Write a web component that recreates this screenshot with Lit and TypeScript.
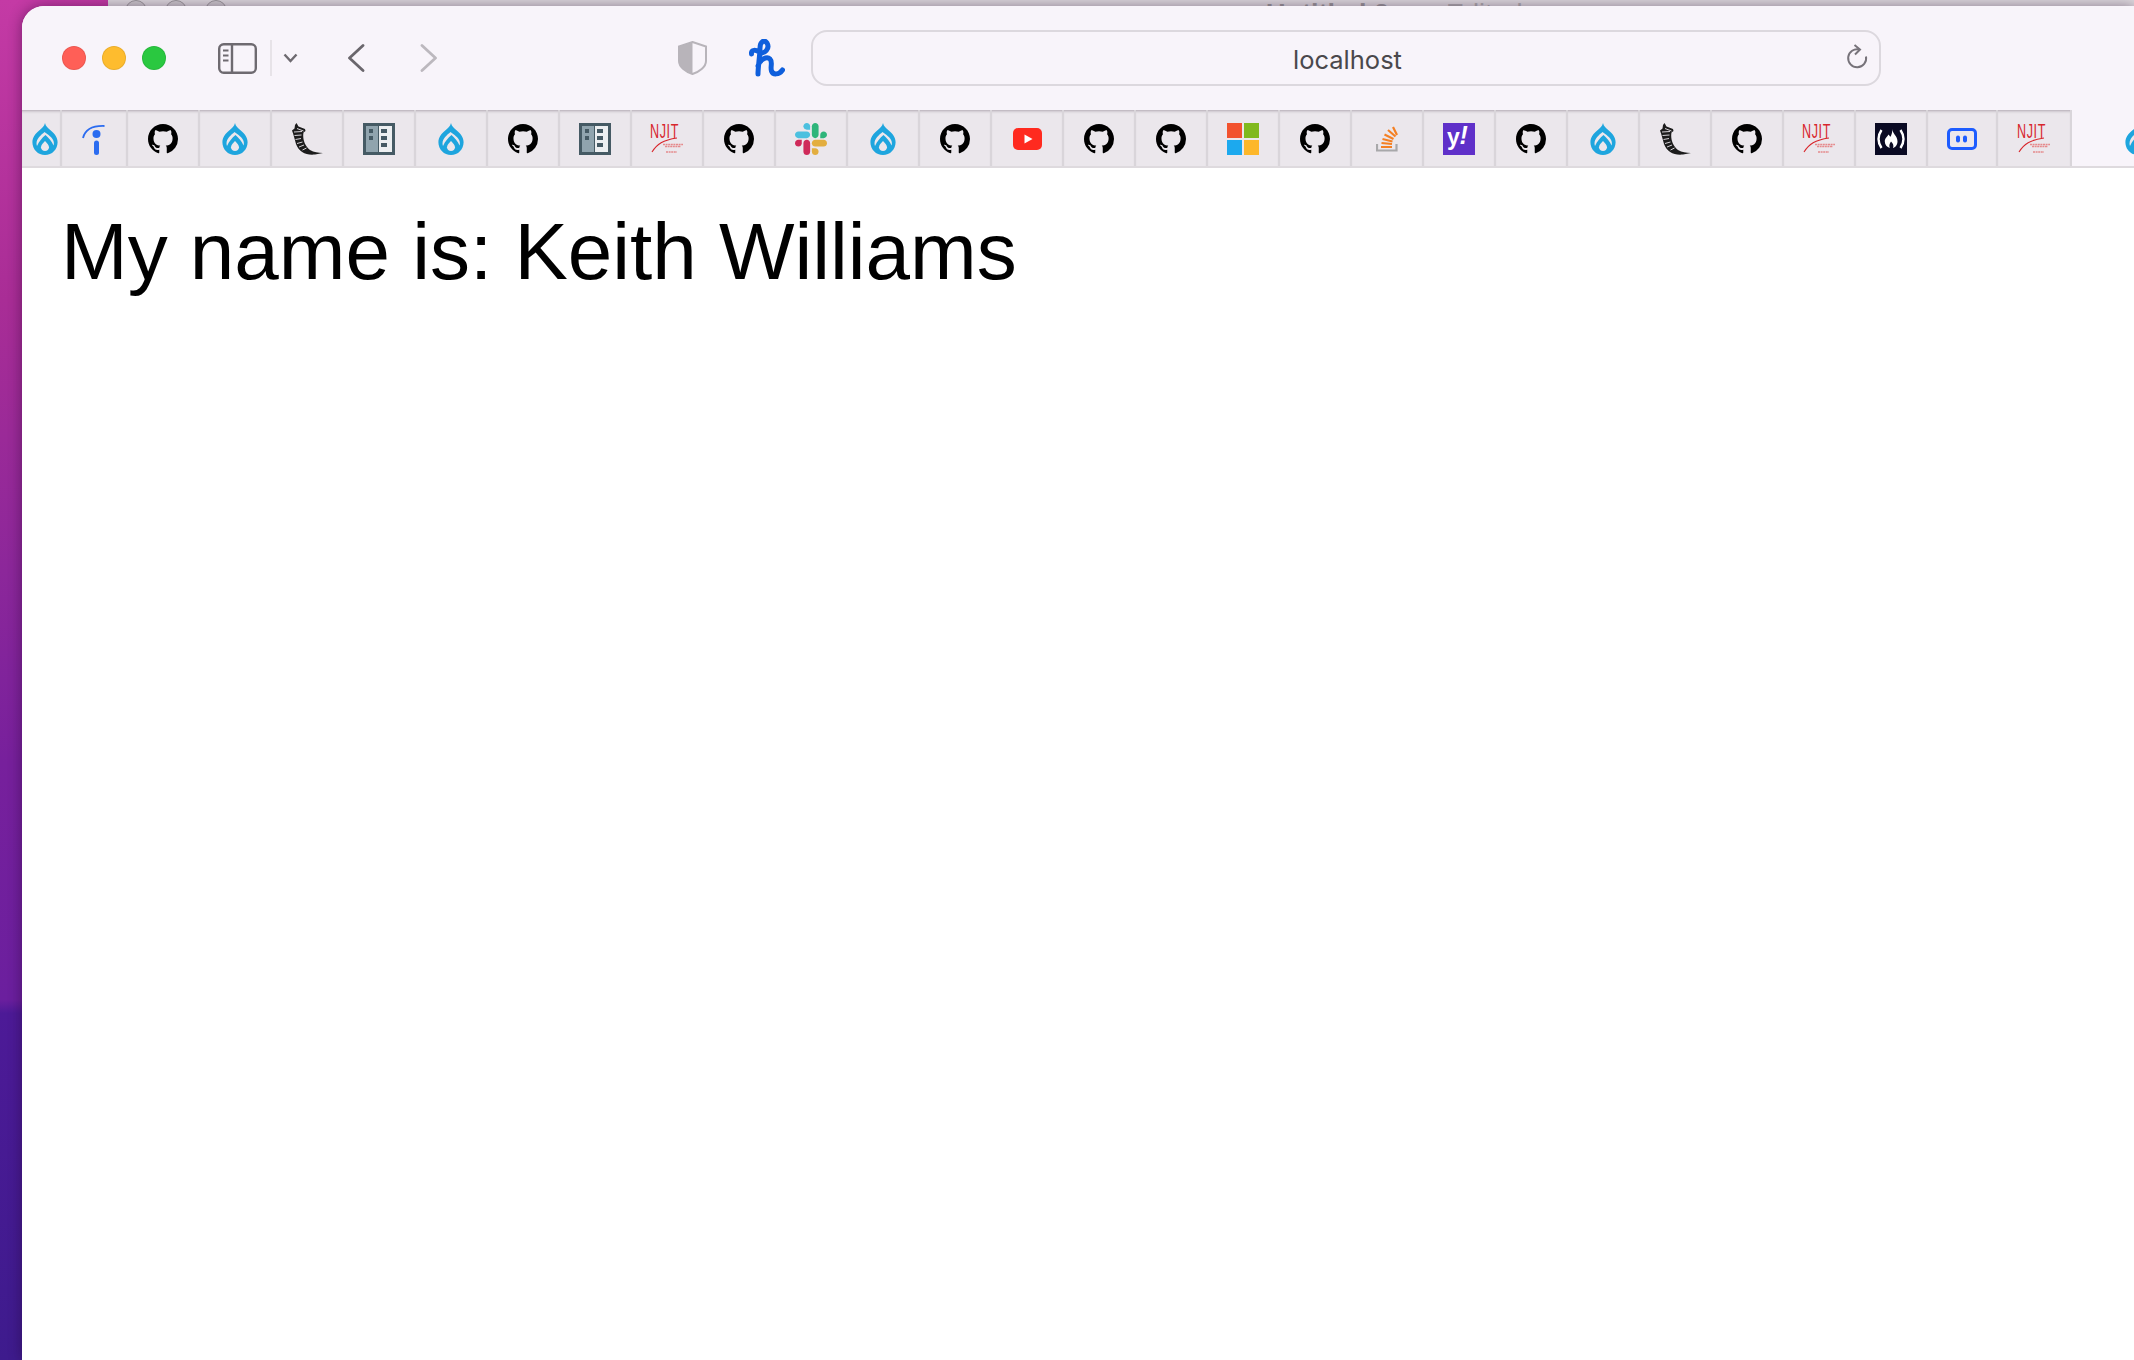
import { LitElement, html, css, svg } from "lit";
import { customElement } from "lit/decorators.js";

const GH = "M8 0C3.58 0 0 3.58 0 8c0 3.54 2.29 6.53 5.47 7.59.4.07.55-.17.55-.38 0-.19-.01-.82-.01-1.49-2.01.37-2.53-.49-2.69-.94-.09-.23-.48-.94-.82-1.13-.28-.15-.68-.52-.01-.53.63-.01 1.08.58 1.23.82.72 1.21 1.87.87 2.33.66.07-.52.28-.87.51-1.07-1.78-.2-3.64-.89-3.64-3.95 0-.87.31-1.59.82-2.15-.08-.2-.36-1.02.08-2.12 0 0 .67-.21 2.2.82.64-.18 1.32-.27 2-.27.68 0 1.36.09 2 .27 1.53-1.04 2.2-.82 2.2-.82.44 1.1.16 1.92.08 2.12.51.56.82 1.27.82 2.15 0 3.07-1.87 3.75-3.65 3.95.29.25.54.73.54 1.48 0 1.07-.01 1.93-.01 2.2 0 .21.15.46.55.38A8.013 8.013 0 0016 8c0-4.42-3.58-8-8-8z";

const njit = svg`<svg viewBox="0 -6 34 44" width="34" height="44">
    <text x="0" y="15" fill="#d8262c" font-family="Liberation Sans" font-size="21" transform="scale(.6 1)" letter-spacing="1">NJIT</text>
    <path d="M2 29C7 21 13 17 27 15" fill="none" stroke="#d8262c" stroke-width="1.100"/>
    <path d="M13 21.500H33M15 23.500H31M16 29H27" stroke="#e58a8c" stroke-width="1.300" stroke-dasharray="2 .6"/>
  </svg>`;

const icons: Record<string, unknown> = {
  github: svg`<svg viewBox="0 0 16 16" width="30" height="30"><path d=${GH} fill="#000"/></svg>`,
  drupal: svg`<svg viewBox="0 0 26 32" width="26" height="32">
    <path d="M13 0C13.600 3.200 16 5.200 18.800 7.600C22.600 10.800 25.600 14.600 25.600 19.200C25.600 26.400 20 32 13 32C6 32 .4 26.400 .4 19.200C.4 14.600 3.400 10.800 7.200 7.600C10 5.200 12.400 3.200 13 0Z" fill="#1ea5de"/>
    <path d="M12.500 9C9 12 4.500 15.500 4.500 20.500C4.500 21.500 4.700 22.300 5 23C7 18.500 10 15 13.500 12C16.500 14.500 20 18.500 21.500 22.500C22 21 22 20 21.500 18C20.500 14.500 16 11.500 12.500 9Z" fill="#ebe7ec"/>
    <path d="M13 18C15.300 20.300 17 22.300 17 24.300C17 26.600 15.200 28 13 28C10.800 28 9 26.600 9 24.300C9 22.300 10.700 20.300 13 18Z" fill="#ebe7ec"/>
  </svg>`,
  intercom: svg`<svg viewBox="0 0 24 32" width="24" height="32">
    <path d="M1 15C3 7 9 2.500 22.500 3" fill="none" stroke="#2b6cf0" stroke-width="1.800"/>
    <circle cx="14.500" cy="11" r="4" fill="#2b6cf0"/>
    <rect x="12" y="17.500" width="5" height="14.500" rx="2.500" fill="#2b6cf0"/>
  </svg>`,
  flask: svg`<svg viewBox="0 0 32 32" width="32" height="32">
    <path d="M4 2L5.500 0L7.500 3.500L14 6L14.500 8L12.500 9.500C11.500 15 13 22 19 27C23 29.500 27 29.500 32 30L24 31.500C15 32.500 8 29 5 21C3.500 16 2.500 11 1 7.500L3.500 5.500Z" fill="#1c1c1c"/>
    <path d="M3 9L11 8.500M3.500 12.500L10.500 12M4.500 16.500L10 15.500M6 20.500L11.500 19M8 24L13 22M11.500 27L15.500 25M6 5.500L12.500 8" stroke="#ebe7ec" stroke-width=".9" fill="none"/>
  </svg>`,
  book: svg`<svg viewBox="0 0 32 32" width="32" height="32">
    <rect width="32" height="32" fill="#455a64"/>
    <rect x="3" y="3" width="12" height="26" fill="#90a4ae"/>
    <rect x="16" y="3" width="13" height="26" fill="#eceff1"/>
    <rect x="6" y="6" width="4" height="4" fill="#455a64"/><rect x="6" y="13" width="4" height="4" fill="#455a64"/>
    <rect x="18" y="6" width="6" height="4" fill="#455a64"/><rect x="18" y="13" width="6" height="4" fill="#455a64"/><rect x="18" y="20" width="6" height="4" fill="#455a64"/>
  </svg>`,
  njit,
  slack: svg`<svg viewBox="0 0 122.800 122.800" width="32" height="32">
    <path d="M25.800 77.600c0 7.100-5.800 12.900-12.900 12.900S0 84.700 0 77.600s5.800-12.900 12.900-12.900h12.900v12.900z" fill="#cf2a5a"/>
    <path d="M32.300 77.600c0-7.100 5.800-12.900 12.900-12.900s12.900 5.800 12.900 12.900v32.300c0 7.100-5.800 12.900-12.900 12.900s-12.900-5.800-12.900-12.900V77.600z" fill="#cf2a5a"/>
    <path d="M45.200 25.800c-7.100 0-12.900-5.800-12.900-12.900S38.100 0 45.200 0s12.900 5.800 12.900 12.900v12.900H45.200z" fill="#4cc0df"/>
    <path d="M45.200 32.300c7.100 0 12.900 5.800 12.900 12.900s-5.800 12.900-12.900 12.900H12.900C5.800 58.100 0 52.300 0 45.200s5.800-12.900 12.900-12.900h32.300z" fill="#4cc0df"/>
    <path d="M97 45.200c0-7.100 5.800-12.900 12.900-12.900s12.900 5.800 12.900 12.900-5.800 12.900-12.900 12.900H97V45.200z" fill="#2eb57a"/>
    <path d="M90.500 45.200c0 7.100-5.800 12.900-12.900 12.900s-12.900-5.800-12.900-12.900V12.900C64.700 5.800 70.500 0 77.600 0s12.900 5.800 12.900 12.900v32.300z" fill="#2eb57a"/>
    <path d="M77.600 97c7.100 0 12.900 5.800 12.900 12.900s-5.800 12.900-12.900 12.900-12.900-5.800-12.900-12.900V97h12.900z" fill="#e3ae3f"/>
    <path d="M77.600 90.500c-7.100 0-12.900-5.800-12.900-12.900s5.800-12.900 12.900-12.900h32.300c7.100 0 12.900 5.800 12.900 12.900s-5.800 12.900-12.900 12.900H77.600z" fill="#e3ae3f"/>
  </svg>`,
  youtube: svg`<svg viewBox="0 0 29 22" width="29" height="22">
    <rect width="29" height="22" rx="5" fill="#ff2a1f"/><path d="M11.500 6.500V15.500L19.500 11Z" fill="#fff"/>
  </svg>`,
  microsoft: svg`<svg viewBox="0 0 32 32" width="32" height="32">
    <rect width="15" height="15" fill="#f2522e"/><rect x="17" width="15" height="15" fill="#80b91e"/>
    <rect y="17" width="15" height="15" fill="#1ca9ee"/><rect x="17" y="17" width="15" height="15" fill="#fdb72a"/>
  </svg>`,
  stack: svg`<svg viewBox="0 0 22 26" width="22" height="26">
    <path d="M1 18V24.500H20.500V18" fill="none" stroke="#a8a8aa" stroke-width="2.200"/>
    <path d="M5 21H16M5.500 17L16 18M6.500 13L16.500 15.500M8.500 8.500L17.500 13M12 4L19.500 10.500M17 1L21 9" fill="none" stroke="#f48024" stroke-width="2.200"/>
  </svg>`,
  yahoo: svg`<svg viewBox="0 0 32 32" width="32" height="32">
    <rect width="32" height="32" fill="#5f30c9"/>
    <text x="4" y="22" fill="#fff" font-family="Liberation Sans" font-weight="700" font-size="23">y</text>
    <text x="16.500" y="21" fill="#fff" font-family="Liberation Sans" font-weight="700" font-style="italic" font-size="25">!</text>
  </svg>`,
  fcc: svg`<svg viewBox="0 0 32 32" width="32" height="32">
    <rect width="32" height="32" fill="#0a0a23"/>
    <path d="M6.500 7C2.500 13 2.500 19 6.500 25M25.500 7C29.500 13 29.500 19 25.500 25" fill="none" stroke="#fff" stroke-width="2.400"/>
    <path d="M17 6C17.500 10.500 22.500 13 22.500 18.500C22.500 22 20 24.500 18 25C19 22.500 18 20.500 16 18.500C15 20.500 13.800 21.500 14.800 25C12 24 9.800 22 9.800 18.500C9.800 15 12.500 13.500 13.500 11.500C14.500 12.800 15 13.500 15.500 13.700C16.700 11.500 17.500 9 17 6Z" fill="#fff"/>
  </svg>`,
  blue: svg`<svg viewBox="0 0 30 22" width="30" height="22">
    <rect x="1.500" y="1.500" width="27" height="19" rx="3.500" fill="none" stroke="#1d5cff" stroke-width="3"/>
    <rect x="9" y="7.500" width="4" height="7" rx="2" fill="#1d5cff"/><rect x="16" y="7.500" width="4" height="7" rx="2" fill="#1d5cff"/>
  </svg>`,
};

const tabs: [string, number][] = [
  ["drupal", 40], ["intercom", 66], ["github", 72], ["drupal", 72], ["flask", 72], ["book", 72],
  ["drupal", 72], ["github", 72], ["book", 72], ["njit", 72], ["github", 72], ["slack", 72],
  ["drupal", 72], ["github", 72], ["youtube", 72], ["github", 72], ["github", 72], ["microsoft", 72],
  ["github", 72], ["stack", 72], ["yahoo", 72], ["github", 72], ["drupal", 72], ["flask", 72],
  ["github", 72], ["njit", 72], ["fcc", 72], ["blue", 70], ["njit", 74],
];

@customElement("app-root")
export class AppRoot extends LitElement {
  static styles = css`
    :host {
      display: block;
      position: relative;
      height: 1360px;
      overflow: hidden;
      background: linear-gradient(180deg, #c43aa5 0, #a92d96 22%, #8c279a 42%, #77209c 56%, #6b1f9e 73.500%, #4d1a97 74.500%, #3e1b8d 100%);
    }
    .behind {
      position: absolute;
      left: 108px;
      right: 0;
      top: 0;
      height: 6px;
      background: #ded9de;
      border-bottom: 1px solid #9f9ba0;
      overflow: hidden;
      font: 700 27px "Liberation Sans", sans-serif;
      color: #9c999c;
    }
    .dot {
      position: absolute;
      top: 0;
      width: 22px;
      height: 22px;
      box-sizing: border-box;
      border: 1px solid #9c989c;
      border-radius: 50%;
      background: #cfcbcf;
    }
    .d1 { left: 17px; }
    .d2 { left: 57px; }
    .d3 { left: 97px; }
    .title {
      position: absolute;
      left: 1158px;
      top: -1px;
      line-height: 30px;
      white-space: pre;
    }
    .edited { font-weight: 400; color: #b0adb0; }
    .window {
      position: absolute;
      left: 22px;
      right: 0;
      top: 6px;
      bottom: 0;
      display: flex;
      flex-direction: column;
      background: #fff;
      border-top-left-radius: 22px;
      box-shadow: 0 0 14px rgba(30, 0, 40, .45);
      overflow: hidden;
    }
    .toolbar {
      flex: 0 0 104px;
      display: flex;
      align-items: center;
      background: #f8f4fa;
      padding-left: 40px;
    }
    .lights { display: flex; gap: 16px; }
    .light { width: 24px; height: 24px; border-radius: 50%; box-sizing: border-box; border: 1px solid rgba(0,0,0,.08); }
    .red { background: #ff5f57; }
    .yellow { background: #febc2e; }
    .green { background: #2ac840; }
    .sidebar { margin-left: 52px; display: block; }
    .divider { width: 2px; height: 36px; margin-left: 13px; background: #e7e3e8; }
    .chev { margin-left: 11px; display: block; }
    .back { margin-left: 49px; display: block; }
    .fwd { margin-left: 55px; display: block; }
    .shield { margin-left: 240px; display: block; }
    .honey { margin-left: 42px; display: block; }
    .address {
      margin-left: 26px;
      width: 1070px;
      height: 56px;
      box-sizing: border-box;
      border: 2px solid #dcd8de;
      border-radius: 16px;
      position: relative;
      display: flex;
      align-items: center;
      justify-content: center;
      font: 400 25.500px Inter, "Liberation Sans", sans-serif;
      color: #4a484c;
      padding: 2px 0 0 3px;
    }
    .reload { position: absolute; right: 11px; top: 12px; display: block; }
    .strip {
      flex: 0 0 58px;
      box-sizing: border-box;
      display: flex;
      background: #f8f4fa;
      border-bottom: 2px solid #dedade;
      overflow: hidden;
    }
    .tab {
      flex: none;
      box-sizing: border-box;
      height: 56px;
      padding-top: 2px;
      display: flex;
      align-items: center;
      justify-content: center;
      background: #ebe7ec;
      border-right: 2px solid #d9d5da;
      box-shadow: inset 0 3px 3px -2px rgba(60, 40, 60, .35);
    }
    .tab:first-child { padding-left: 7px; }
    .tab:last-of-type { border-right: none; }
    .tab svg { display: block; }
    .stray { flex: none; margin-left: 53px; height: 56px; padding-top: 2px; box-sizing: border-box; display: flex; align-items: center; }
    .stray svg { display: block; }
    .content { flex: 1; padding: 0 0 0 39px; }
    h1 {
      margin: 0;
      padding-top: 38px;
      font: 400 80px/92px "Liberation Sans", Arial, sans-serif;
      color: #000;
    }
  `;

  render() {
    return html`
      <div class="behind">
        <span class="dot d1"></span><span class="dot d2"></span><span class="dot d3"></span>
        <span class="title">Untitled 2   <span class="edited">— Edited</span></span>
      </div>
      <div class="window">
        <div class="toolbar">
          <div class="lights">
            <span class="light red"></span><span class="light yellow"></span><span class="light green"></span>
          </div>
          <svg class="sidebar" width="39" height="31" viewBox="0 0 39 31">
            <rect x="1.200" y="1.200" width="36.600" height="28.600" rx="4.500" fill="none" stroke="#6e6a70" stroke-width="2.400"/>
            <path d="M14 1V30" stroke="#6e6a70" stroke-width="2.400"/>
            <path d="M5 7.500H10.500M5 12.500H10.500M5 17.500H10.500" stroke="#6e6a70" stroke-width="1.800"/>
          </svg>
          <span class="divider"></span>
          <svg class="chev" width="15" height="10" viewBox="0 0 15 10"><path d="M1.500 1.500L7.500 8L13.500 1.500" fill="none" stroke="#6e6a70" stroke-width="2.400"/></svg>
          <svg class="back" width="18" height="28" viewBox="0 0 18 28"><path d="M16 1.500L2.500 14L16 26.500" fill="none" stroke="#6a666c" stroke-width="2.800" stroke-linecap="round" stroke-linejoin="round"/></svg>
          <svg class="fwd" width="18" height="28" viewBox="0 0 18 28"><path d="M2 1.500L15.500 14L2 26.500" fill="none" stroke="#bcb8be" stroke-width="2.800" stroke-linecap="round" stroke-linejoin="round"/></svg>
          <svg class="shield" width="29" height="34" viewBox="0 0 29 34">
            <path d="M14.500 1L28 5.500V20C28 26 21 31 14.500 33C8 31 1 26 1 20V5.500Z" fill="#f8f4fa" stroke="#b8b4ba" stroke-width="2"/>
            <path d="M14.500 1L1 5.500V20C1 26 8 31 14.500 33Z" fill="#b8b4ba"/>
          </svg>
          <svg class="honey" width="36" height="38" viewBox="0 0 36 38">
            <path d="M2.500 15C2 10 7 11 10 13C16 16 21 9 18 4C15 0 11 3 11 9C11 16 9 28 9 35M9 27C11 20 18 17 21 20C24 23 21 28 22.500 32C24 36 30 36 33.500 31" fill="none" stroke="#0f5fdc" stroke-width="5" stroke-linecap="round" stroke-linejoin="round"/>
          </svg>
          <div class="address">
            localhost
            <svg class="reload" width="22" height="27" viewBox="0 0 22 27">
              <path d="M13.500 5.500A9 9 0 1 0 20 12.500" fill="none" stroke="#77737a" stroke-width="2"/>
              <path d="M8.500 1L14 5.500L9 10.500" fill="none" stroke="#77737a" stroke-width="2"/>
            </svg>
          </div>
        </div>
        <div class="strip">
          ${tabs.map(([n, w]) => html`<div class="tab" style="width:${w}px">${icons[n]}</div>`)}
          <div class="stray">${icons.drupal}</div>
        </div>
        <div class="content"><h1>My name is: Keith Williams</h1></div>
      </div>
    `;
  }
}
